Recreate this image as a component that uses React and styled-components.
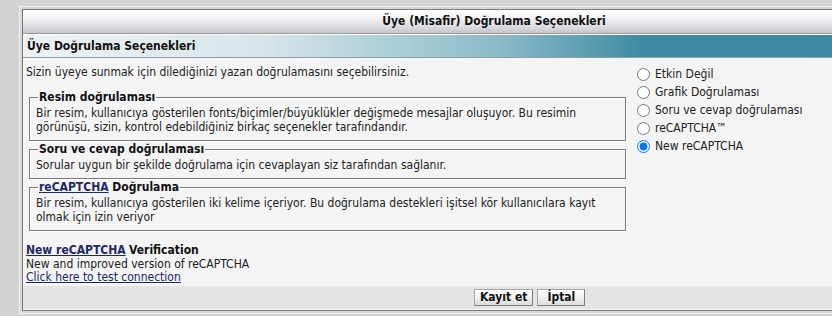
import React from "react";
import styled, { createGlobalStyle } from "styled-components";

const Global = createGlobalStyle`
  html, body { margin: 0; padding: 0; background: #d3d3d3; overflow: hidden; }
  body { font-family: "DejaVu Sans Condensed", "DejaVu Sans", Verdana, sans-serif; font-size: 12px; color: #222; }
`;

const Page = styled.div`
  padding: 6px 0 0 19px;
`;

const Outer = styled.div`
  width: 944px;
  border: 1px solid #f2f2f2;
  padding: 2px;
  background: #d6d6d6;
`;

const Panel = styled.div`
  border: 1px solid #7c7c7c;
  background: #f4f4f4;
`;

const TitleBar = styled.div`
  height: 23px;
  line-height: 23px;
  text-align: center;
  font-weight: bold;
  color: #111;
  background: linear-gradient(#ffffff 0%, #f4f4f7 35%, #d6d6dc 80%, #c4c4cc 100%);
  border-bottom: 1px solid #9a9a9a;
  box-shadow: 0 1px 0 #ffffff;
  margin-bottom: 1px;
`;

const SectionBar = styled.div`
  height: 22px;
  line-height: 22px;
  padding-left: 4px;
  font-weight: bold;
  color: #111;
  background: linear-gradient(90deg, #eef2f4 0%, #d8e6ea 25%, #8dbcc9 50%, #3d8ba1 66%, #3a89a0 100%);
  border-bottom: 1px solid #8a9fa6;
`;

const Body = styled.div`
  display: flex;
`;

const LeftCol = styled.div`
  width: 600px;
  padding: 7px 0 1px 3px;
  line-height: 14px;
`;

const Intro = styled.div`
  margin-bottom: 11px;
`;

const Box = styled.fieldset`
  margin: 0 0 1px 3px;
  padding: 2px 6px 6px 6px;
  border: 1px solid #7a7a7a;
  box-shadow: inset 1px 1px 0 #ffffff, 1px 1px 0 #ffffff;
`;

const Legend = styled.legend`
  padding: 0 1px;
  margin-left: 2px;
  font-weight: bold;
  color: #111;
`;

const Link = styled.a`
  color: #1d2a66;
  text-decoration: underline;
  font-weight: ${(p) => (p.$bold ? "bold" : "normal")};
  cursor: pointer;
`;

const Verify = styled.div`
  margin-top: 13px;
  line-height: 13.5px;
`;

const Strong = styled.span`
  font-weight: bold;
  color: #111;
`;

const RightCol = styled.div`
  padding: 7px 0 0 11px;
  display: flex;
  flex-direction: column;
`;

const Option = styled.label`
  display: flex;
  align-items: center;
  height: 18px;
  color: #222;
`;

const Radio = styled.input`
  width: 13px;
  height: 13px;
  margin: 0 5px 0 0;
`;

const Footer = styled.div`
  background: #e4e4e4;
  height: 23px;
  display: flex;
  align-items: center;
  gap: 4px;
  padding-left: 451px;
  border-bottom: 1px solid #f8f8f8;
`;

const Button = styled.button`
  font-family: inherit;
  font-size: 12px;
  font-weight: bold;
  color: #111;
  height: 17px;
  padding: 0 ${(p) => p.$px}px;
  border: 1px solid #a6a6a6;
  border-right-color: #7d7d7d;
  border-bottom-color: #7d7d7d;
  background: linear-gradient(#ffffff, #f0f0f0 50%, #dcdcdc);
  line-height: 14px;
  cursor: pointer;
`;

const options = ["Etkin Değil", "Grafik Doğrulaması", "Soru ve cevap doğrulaması", "reCAPTCHA™", "New reCAPTCHA"];

export default function App() {
  return (
    <>
      <Global />
      <Page>
        <Outer>
          <Panel>
            <TitleBar>Üye (Misafir) Doğrulama Seçenekleri</TitleBar>
            <SectionBar>Üye Doğrulama Seçenekleri</SectionBar>
            <Body>
              <LeftCol>
                <Intro>Sizin üyeye sunmak için dilediğinizi yazan doğrulamasını seçebilirsiniz.</Intro>
                <Box>
                  <Legend>Resim doğrulaması</Legend>
                  Bir resim, kullanıcıya gösterilen fonts/biçimler/büyüklükler değişmede mesajlar oluşuyor. Bu resimin görünüşü, sizin, kontrol edebildiğiniz birkaç seçenekler tarafındandır.
                </Box>
                <Box>
                  <Legend>Soru ve cevap doğrulaması</Legend>
                  Sorular uygun bir şekilde doğrulama için cevaplayan siz tarafından sağlanır.
                </Box>
                <Box>
                  <Legend>
                    <Link $bold>reCAPTCHA</Link> Doğrulama
                  </Legend>
                  Bir resim, kullanıcıya gösterilen iki kelime içeriyor. Bu doğrulama destekleri işitsel kör kullanıcılara kayıt olmak için izin veriyor
                </Box>
                <Verify>
                  <Link $bold>New reCAPTCHA</Link> <Strong>Verification</Strong>
                  <br />
                  New and improved version of reCAPTCHA
                  <br />
                  <Link>Click here to test connection</Link>
                </Verify>
              </LeftCol>
              <RightCol>
                {options.map((o, i) => (
                  <Option key={o}>
                    <Radio type="radio" name="captcha" defaultChecked={i === 4} />
                    {o}
                  </Option>
                ))}
              </RightCol>
            </Body>
            <Footer>
              <Button $px={5}>Kayıt et</Button>
              <Button $px={9}>İptal</Button>
            </Footer>
          </Panel>
        </Outer>
      </Page>
    </>
  );
}
